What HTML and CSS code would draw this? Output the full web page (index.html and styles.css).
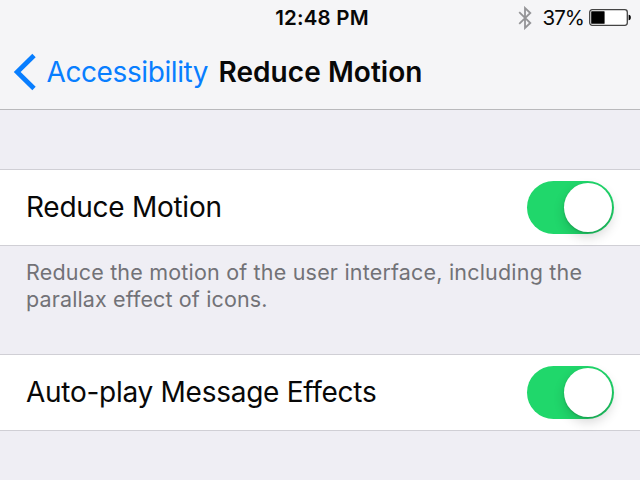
FILE: index.html
```
<!DOCTYPE html>
<html lang="en">
<head>
<meta charset="utf-8">
<title>Reduce Motion</title>
<link rel="stylesheet" href="styles.css">
</head>
<body>
<header class="header">
  <div class="status">
    <span class="time">12:48 PM</span>
    <div class="indicators">
      <svg class="bluetooth" width="14" height="24" viewBox="0 0 14 24"><path d="M1.200 6.200 12.300 17 7 22V2l5.300 5L1.200 17.800"/></svg>
      <span class="percent">37%</span>
      <svg class="battery" width="43" height="18" viewBox="0 0 43 18"><rect x=".7" y=".7" width="37.600" height="15.600" rx="2.500" fill="#fff" stroke="#444" stroke-width="1.300"/><rect x="2.200" y="2.200" width="13.400" height="12.600" rx=".6"/><path d="M39.600 5.800q2.200 0 2.200 2.700t-2.200 2.700z"/></svg>
    </div>
  </div>
  <nav class="nav">
    <a class="back"><svg class="chevron" width="23" height="38" viewBox="0 0 23 38"><path d="M21 2.500 4.200 19l16.800 16.500"/></svg><span class="back-label">Accessibility</span></a>
    <h1 class="title">Reduce Motion</h1>
  </nav>
</header>
<main class="settings">
  <section class="row"><span class="label motion">Reduce Motion</span><span class="switch"><span class="knob"></span></span></section>
  <p class="note"><span class="note-first">Reduce the motion of the user interface, including the</span><br><span class="note-second">parallax effect of icons.</span></p>
  <section class="row"><span class="label effects">Auto-play Message Effects</span><span class="switch"><span class="knob"></span></span></section>
</main>
</body>
</html>
```
FILE: styles.css
```
* { box-sizing: border-box; }
body {
  margin: 0;
  height: 480px;
  overflow: hidden;
  background: #efeef4;
  color: #080808;
  font-family: Inter, "Liberation Sans", sans-serif;
}
.header {
  height: 110px;
  background: #f5f5f7;
  border-bottom: 1px solid #b9b9bc;
}
.status {
  display: grid;
  grid-template-columns: 1fr auto 1fr;
  height: 35px;
  align-items: center;
  padding-right: 8.500px;
  padding-left: 12.500px;
}
.time { grid-column: 2; font-size: 20.500px; font-weight: 600; letter-spacing: .2px; white-space: nowrap; }
.indicators { display: flex; justify-content: flex-end; align-items: center; }
.bluetooth { fill: none; stroke: #949497; stroke-width: 1.800; margin-right: 10.500px; }
.percent { font-size: 20.500px; letter-spacing: -1px; margin-right: 4.500px; }
.nav { display: flex; align-items: center; height: 73px; padding-left: 13px; white-space: nowrap; }
.back { display: flex; align-items: center; color: #087eff; width: 205.500px; }
.chevron { fill: none; stroke: #087eff; stroke-width: 4.800; }
.back-label { font-size: 28px; margin-left: 10.500px; letter-spacing: -.4px; }
.title { margin: 0; font-size: 28px; font-weight: 600; letter-spacing: .06px; }
.settings { padding-top: 59px; }
.row {
  display: flex;
  align-items: center;
  justify-content: space-between;
  height: 77px;
  padding: 0 26px;
  background: #fff;
  border-top: 1px solid #d0cfd5;
  border-bottom: 1px solid #d0cfd5;
}
.label { font-size: 28px; letter-spacing: -.27px; white-space: nowrap; padding-bottom: 2px; }
.switch {
  display: flex;
  justify-content: flex-end;
  width: 87px;
  height: 53px;
  padding: 2px;
  border-radius: 27px;
  background: #20d76b;
}
.knob {
  width: 48px;
  height: 49px;
  border-radius: 50%;
  background: #fff;
  box-shadow: 0 5px 12px rgba(0, 0, 0, .16), 0 1px 2px rgba(0, 0, 0, .18);
}
.note {
  margin: 0;
  height: 108px;
  padding: 13px 26px 0;
  color: #727277;
  font-size: 21.500px;
  line-height: 27px;
  letter-spacing: .19px;
  white-space: nowrap;
}
.note-second { letter-spacing: .13px; }
```
